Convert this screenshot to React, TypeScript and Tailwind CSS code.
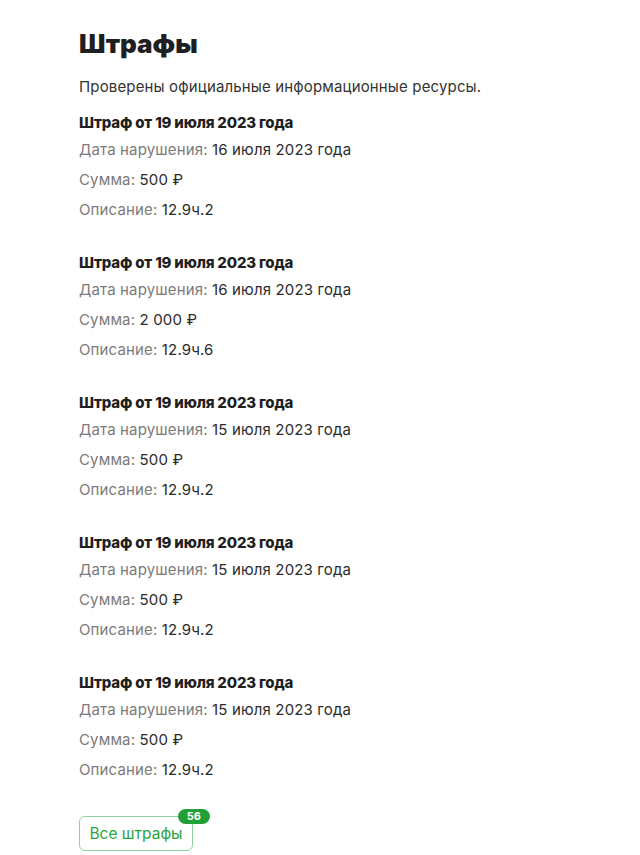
const fines = [
  { date: "16 июля 2023 года", sum: "500 ₽", desc: "12.9ч.2" },
  { date: "16 июля 2023 года", sum: "2 000 ₽", desc: "12.9ч.6" },
  { date: "15 июля 2023 года", sum: "500 ₽", desc: "12.9ч.2" },
  { date: "15 июля 2023 года", sum: "500 ₽", desc: "12.9ч.2" },
  { date: "15 июля 2023 года", sum: "500 ₽", desc: "12.9ч.2" },
]

function Row({ label, value }: { label: string; value: string }) {
  return (
    <div className="text-[15px] leading-[30px] tracking-[0.15px]">
      <span className="text-[#7b7b7b]">{label}: </span>
      <span className="text-[#2b2b2b]">{value}</span>
    </div>
  )
}

export default function App() {
  return (
    <div className="min-h-[855px] bg-white px-[79px] pt-[26px]" style={{ fontFamily: 'Inter, "Noto Sans", sans-serif' }}>
      <h1 className="text-[26px] font-black leading-[36px] text-[#1f1f22]">Штрафы</h1>
      <p className="mt-[14px] text-[15px] leading-[22px] tracking-[0.15px] text-[#333333]">Проверены официальные информационные ресурсы.</p>
      <div className="mt-[14px] flex flex-col gap-[27px]">
        {fines.map((f, i) => (
          <div key={i}>
            <div className="text-[15px] font-extrabold leading-[22px] tracking-[-0.2px] text-[#1f1f22]">Штраф от 19 июля 2023 года</div>
            <div className="mt-[1px]">
              <Row label="Дата нарушения" value={f.date} />
              <Row label="Сумма" value={f.sum} />
              <Row label="Описание" value={f.desc} />
            </div>
          </div>
        ))}
      </div>
      <div className="mt-[31px] flex">
        <button className="relative h-[35px] w-[114px] rounded-[6px] border border-[#8fd19e] text-[15.5px] text-[#2aa43f]">
          Все штрафы
          <span className="absolute right-[-18px] top-[-8px] rounded-full bg-[#21a038] px-[9px] text-[11px] font-bold leading-[15px] text-white">56</span>
        </button>
      </div>
    </div>
  )
}
